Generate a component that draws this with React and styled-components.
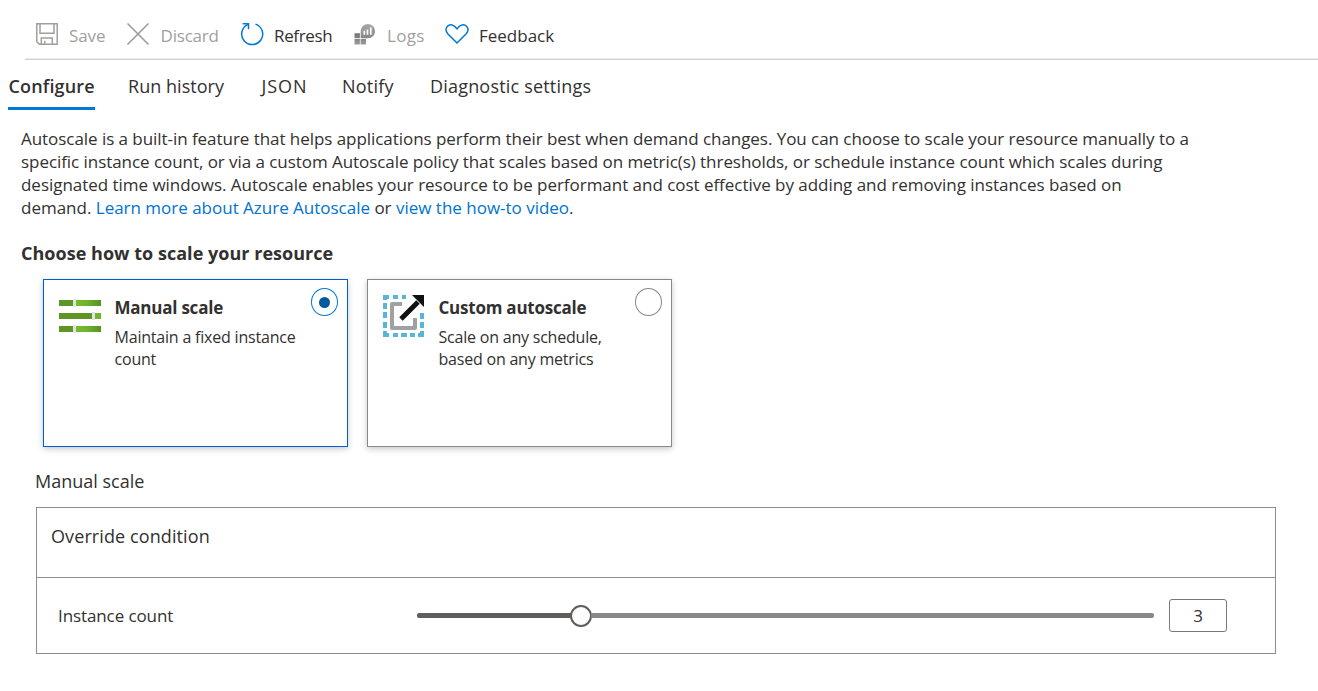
import React from "react";
import styled, { createGlobalStyle } from "styled-components";

const GlobalStyle = createGlobalStyle`
  * { box-sizing: border-box; }
  body {
    margin: 0;
    background: #fff;
    color: #323130;
    font-family: "Segoe UI", "Open Sans", "Noto Sans", sans-serif;
    font-size: 18px;
  }
`;

const Page = styled.main`
  width: 1318px;
  height: 691px;
  overflow: hidden;
  display: flex;
  flex-direction: column;
`;

const Toolbar = styled.div`
  display: flex;
  align-items: center;
  height: 60px;
  margin-left: 25px;
  padding: 9px 0 0 10px;
  border-bottom: 1px solid #d0d0d0;
  box-shadow: inset 0 -1px #ececec;
`;

const Command = styled.button`
  display: flex;
  align-items: center;
  gap: ${(p) => p.$gap}px;
  width: ${(p) => p.$width}px;
  padding: 0;
  border: 0;
  background: none;
  font: inherit;
  font-size: 17px;
  line-height: 24px;
  white-space: nowrap;
  letter-spacing: ${(p) => p.$track || 0}px;
  color: ${(p) => (p.$disabled ? "#a19f9d" : "#323130")};
  svg { flex: none; }
`;

const CommandLabel = styled.span`
  padding-top: 3px;
`;

const Tabs = styled.nav`
  display: flex;
  height: 50px;
  padding-left: 8px;
`;

const Tab = styled.a`
  flex: none;
  height: 50px;
  width: ${(p) => p.$width}px;
  margin-right: ${(p) => p.$after || 0}px;
  padding: 14px 0 0 ${(p) => (p.$active ? 0.5 : 1)}px;
  line-height: 24px;
  white-space: nowrap;
  font-weight: ${(p) => (p.$active ? 600 : 400)};
  letter-spacing: ${(p) => p.$track || 0}px;
  border-bottom: 3px solid ${(p) => (p.$active ? "#0078d4" : "transparent")};
`;

const Intro = styled.p`
  margin: 17px 0 0 21px;
  font-size: 17px;
  line-height: 23px;
`;

const Line = styled.span`
  display: block;
  white-space: nowrap;
  letter-spacing: ${(p) => p.$track || 0}px;
`;

const Link = styled.a`
  color: #0073d1;
`;

const Heading = styled.h2`
  margin: 22px 0 0 21px;
  font-size: 18px;
  font-weight: 700;
  line-height: 24px;
  letter-spacing: 0.03px;
`;

const Cards = styled.div`
  display: flex;
  gap: 19px;
  margin: 14px 0 0 43px;
`;

const Card = styled.button`
  display: flex;
  align-items: flex-start;
  width: 305px;
  height: 168px;
  padding: 8px 9px 0 15px;
  border: 1px solid ${(p) => (p.$selected ? "#015cda" : "#8a8886")};
  background: #fff;
  box-shadow: 0 2px 6px rgba(0, 0, 0, 0.22);
  color: inherit;
  font: inherit;
  text-align: left;
  svg { flex: none; }
`;

const CardBody = styled.div`
  flex: 1;
  min-width: 0;
  margin: 8px 0 0 12.5px;
`;

const CardTitle = styled.div`
  font-size: 17px;
  font-weight: 700;
  line-height: 24px;
  white-space: nowrap;
  letter-spacing: -0.23px;
`;

const CardText = styled.div`
  margin-top: 6px;
  font-size: 16px;
  line-height: 22px;
`;

const Radio = styled.span`
  flex: none;
  display: grid;
  place-items: center;
  width: 27px;
  height: 28px;
  border: 1px solid ${(p) => (p.$checked ? "#0078d4" : "#8a8886")};
  border-radius: 50%;
`;

const Dot = styled.span`
  width: 11px;
  height: 11px;
  border-radius: 50%;
  background: #005a9e;
`;

const SectionLabel = styled.div`
  margin: 22px 0 0 35px;
  line-height: 24px;
`;

const Panel = styled.section`
  width: 1240px;
  height: 147px;
  margin: 14px 0 0 36px;
  border: 1px solid #8f8d8c;
`;

const PanelHeader = styled.div`
  height: 70px;
  padding: 16px 14px;
  border-bottom: 1px solid #8f8d8c;
  line-height: 24px;
  letter-spacing: 0.1px;
`;

const PanelRow = styled.div`
  display: flex;
  align-items: center;
  height: 75px;
  padding-left: 21px;
  font-size: 17px;
`;

const FieldLabel = styled.label`
  width: 359px;
  letter-spacing: -0.1px;
`;

const Slider = styled.div`
  display: flex;
  align-items: center;
  width: 737px;
`;

const Track = styled.span`
  flex: ${(p) => (p.$filled ? "none" : 1)};
  width: ${(p) => (p.$filled ? "154px" : "auto")};
  height: 5px;
  background: ${(p) => (p.$filled ? "#605e5c" : "#8a8886")};
  border-radius: ${(p) => (p.$filled ? "2px 0 0 2px" : "0 2px 2px 0")};
`;

const Thumb = styled.span`
  flex: none;
  width: 22px;
  height: 22px;
  margin: 1px -1px 0;
  border: 2px solid #605e5c;
  border-radius: 50%;
  background: #fff;
`;

const CountBox = styled.div`
  width: 58px;
  height: 33px;
  margin-left: 15px;
  border: 1px solid #7a7876;
  border-radius: 3px;
  text-align: center;
  line-height: 31px;
`;

const SaveIcon = () => (
  <svg width="24" height="24" viewBox="0 0 24 24" fill="none" stroke="#a19f9d" strokeWidth="1.5">
    <path d="M1.8 1.8H22.2V22.2H4.3L1.8 19.7Z" />
    <path d="M5 2V11.2H19V2M6.3 22V16H17.3V22M9.7 22V18.8" />
  </svg>
);

const DiscardIcon = () => (
  <svg width="24" height="24" viewBox="0 0 24 24" stroke="#a19f9d" strokeWidth="1.7">
    <path d="M1.5 1.5L22.5 22.5M22.5 1.5L1.5 22.5" />
  </svg>
);

const RefreshIcon = () => (
  <svg width="24" height="24" viewBox="0 0 24 24" fill="none" stroke="#0078d4" strokeWidth="1.5">
    <path d="M15.5 2.1A10.5 10.5 0 1 1 8.1 2.4" />
    <path d="M2.6 1.8H8.5V7.3" />
  </svg>
);

const LogsIcon = () => (
  <svg width="24" height="24" viewBox="0 0 24 24">
    <defs>
      <linearGradient id="logsTile" x1="0" y1="0" x2="0" y2="1">
        <stop offset="0" stopColor="#727272" />
        <stop offset="1" stopColor="#9b9b9b" />
      </linearGradient>
      <linearGradient id="logsBubble" x1="0" y1="0" x2="0" y2="1">
        <stop offset="0" stopColor="#aaa" />
        <stop offset="1" stopColor="#858585" />
      </linearGradient>
    </defs>
    <path fill="url(#logsTile)" d="M1.5 11.2H6.9V16.3H1.5ZM1.5 17H6.9V22.4H1.5ZM7.6 17H13V22.4H7.6Z" />
    <path fill="url(#logsBubble)" d="M7.7 16.3V9.2A7.2 7.2 0 1 1 14.9 16.3Z" />
    <path stroke="#fff" strokeWidth="1.7" d="M11.3 8.8V12.8M14.5 7.6V12.8M17.8 5.6V12.8" />
  </svg>
);

const HeartIcon = () => (
  <svg width="24" height="24" viewBox="0 0 24 24" fill="none" stroke="#0078d4" strokeWidth="1.5">
    <path d="M12 21L3 12.1C-1.6 7.1 3 1.8 7.1 3C9.4 3.4 10.6 5 12 6.8C13.4 5 14.6 3.4 16.9 3C21 1.8 25.6 7.1 21 12.1Z" />
  </svg>
);

const ManualIcon = () => (
  <svg width="43" height="48" viewBox="0 0 43 48">
    <defs>
      <linearGradient id="bar" x1="0" y1="0" x2="1" y2="0">
        <stop offset="0" stopColor="#76bc2d" />
        <stop offset="0.4" stopColor="#70b52b" />
        <stop offset="1" stopColor="#5a9022" />
      </linearGradient>
    </defs>
    <path fill="#5e9624" d="M0 12H15V18H0ZM0 25H34V31H0ZM0 38H15V44H0Z" />
    <path fill="url(#bar)" d="M17 12H42V18H17ZM17 38H42V44H17Z" />
    <path fill="#70b52b" d="M36 25H42V31H36Z" />
    <path fill="#e3e3e3" d="M14 11H17V19H14ZM33 24H36V32H33ZM14 37H17V45H14Z" />
  </svg>
);

const AutoIcon = () => (
  <svg width="43" height="49" viewBox="0 0 43 49">
    <path
      fill="none"
      stroke="#59b4d9"
      strokeWidth="4"
      d="M2 12V9H6M10 9H15M19 9H23M2 15V21M2 24V30M2 34V40M2 43V47H6M10 47H15M18 47H24M27 47H32M35 47H39V43M39 34V40M39 25V31"
    />
    <path fill="none" stroke="#a0a1a2" strokeWidth="4" strokeLinejoin="round" d="M19 16H9V40H32V30" />
    <path stroke="#111" strokeWidth="5" d="M18 31L35 14" />
    <path fill="#111" d="M29 7H41V19Z" />
  </svg>
);

export default function App() {
  return (
    <Page>
      <GlobalStyle />
      <Toolbar>
        <Command $disabled $width={91} $gap={10} $track={-0.1}><SaveIcon /><CommandLabel>Save</CommandLabel></Command>
        <Command $disabled $width={114} $gap={10.5} $track={-0.2}><DiscardIcon /><CommandLabel>Discard</CommandLabel></Command>
        <Command $width={113} $gap={10} $track={-0.35}><RefreshIcon /><CommandLabel>Refresh</CommandLabel></Command>
        <Command $disabled $width={92} $gap={10} $track={0.3}><LogsIcon /><CommandLabel>Logs</CommandLabel></Command>
        <Command $width={120} $gap={10}><HeartIcon /><CommandLabel>Feedback</CommandLabel></Command>
      </Toolbar>
      <Tabs>
        <Tab $active $width={87} $after={32} $track={0.15}>Configure</Tab>
        <Tab $width={98} $after={35.5} $track={0.03}>Run history</Tab>
        <Tab $width={48} $after={32.5} $track={0.9}>JSON</Tab>
        <Tab $width={54} $after={34} $track={0.2}>Notify</Tab>
        <Tab $width={164} $track={0.19}>Diagnostic settings</Tab>
      </Tabs>
      <Intro>
        <Line $track={-0.05}>Autoscale is a built-in feature that helps applications perform their best when demand changes. You can choose to scale your resource manually to a</Line>
        <Line $track={-0.055}>specific instance count, or via a custom Autoscale policy that scales based on metric(s) thresholds, or schedule instance count which scales during</Line>
        <Line $track={-0.032}>designated time windows. Autoscale enables your resource to be performant and cost effective by adding and removing instances based on</Line>
        <Line $track={-0.01}>demand. <Link>Learn more about Azure Autoscale</Link> or <Link>view the how-to video</Link>.</Line>
      </Intro>
      <Heading>Choose how to scale your resource</Heading>
      <Cards>
        <Card $selected>
          <ManualIcon />
          <CardBody>
            <CardTitle>Manual scale</CardTitle>
            <CardText>
              <Line $track={-0.2}>Maintain a fixed instance</Line>
              <Line $track={-0.2}>count</Line>
            </CardText>
          </CardBody>
          <Radio $checked><Dot /></Radio>
        </Card>
        <Card>
          <AutoIcon />
          <CardBody>
            <CardTitle>Custom autoscale</CardTitle>
            <CardText>
              <Line $track={-0.21}>Scale on any schedule,</Line>
              <Line $track={-0.21}>based on any metrics</Line>
            </CardText>
          </CardBody>
          <Radio />
        </Card>
      </Cards>
      <SectionLabel>Manual scale</SectionLabel>
      <Panel>
        <PanelHeader>Override condition</PanelHeader>
        <PanelRow>
          <FieldLabel>Instance count</FieldLabel>
          <Slider>
            <Track $filled />
            <Thumb />
            <Track />
          </Slider>
          <CountBox>3</CountBox>
        </PanelRow>
      </Panel>
    </Page>
  );
}
